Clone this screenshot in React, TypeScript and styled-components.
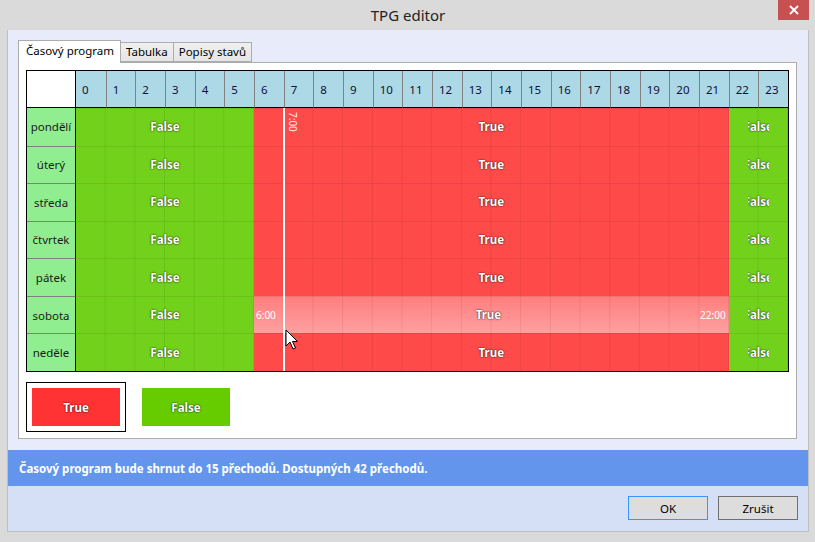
import React, { FC } from 'react';
import styled, { createGlobalStyle } from 'styled-components';

const FONT = '"Noto Sans", "Open Sans", sans-serif';
const TEXT_SIZE = '11.5px';
const HOURS = Array.from({ length: 24 }, (_, i) => i);
const DAYS = ['pondělí', 'úterý', 'středa', 'čtvrtek', 'pátek', 'sobota', 'neděle'];

type Segment = { from: number; to: number; value: boolean; clip?: boolean };
const SEGMENTS: Segment[] = [
  { from: 0, to: 6, value: false },
  { from: 6, to: 22, value: true },
  { from: 22, to: 24, value: false, clip: true },
];
const SELECTED_DAY = 5;

const GlobalStyle = createGlobalStyle`
  html, body {
    margin: 0;
    padding: 0;
    width: 815px;
    height: 542px;
    overflow: hidden;
    background: #dadada;
    font-family: ${FONT};
  }
`;

const Window = styled.div`
  position: relative;
  display: flex;
  flex-direction: column;
  width: 815px;
  height: 542px;
  box-sizing: border-box;
  padding: 0 6px 10px 7px;
  background: #dadada;
`;

const TitleBar = styled.div`
  display: grid;
  grid-template-columns: 1fr auto 1fr;
  height: 30px;
  flex: 0 0 auto;
`;
const Title = styled.div`
  grid-column: 2;
  align-self: center;
  font-size: 15px;
  color: #222;
  padding-bottom: 1px;
`;
const CloseButton = styled.div`
  grid-column: 3;
  justify-self: end;
  align-self: start;
  width: 31px;
  height: 20px;
  background: #c75050;
  display: flex;
  align-items: center;
  justify-content: center;
`;

const Client = styled.div`
  flex: 1 1 auto;
  display: flex;
  flex-direction: column;
  border: 1px solid #bfbfbf;
  border-top: none;
  background: #e8ebf9;
`;

const TabArea = styled.div`
  display: flex;
  flex-direction: column;
  padding: 10px 11px 11px 10px;
`;
const TabStrip = styled.div`
  display: flex;
  align-items: flex-end;
`;
const Tab = styled.div<{ $active?: boolean }>`
  box-sizing: border-box;
  position: relative;
  z-index: ${(p) => (p.$active ? 1 : 0)};
  height: ${(p) => (p.$active ? 23 : 20)}px;
  margin-bottom: ${(p) => (p.$active ? -1 : 0)}px;
  margin-left: ${(p) => (p.$active ? 0 : -1)}px;
  padding: ${(p) => (p.$active ? '2px 6px 0 7px' : '1px 5px 0 5px')};
  border: 1px solid #acacac;
  border-bottom: ${(p) => (p.$active ? 'none' : '1px solid #acacac')};
  background: ${(p) => (p.$active ? '#ffffff' : 'linear-gradient(#f0f0f0, #e5e5e5)')};
  font-size: ${TEXT_SIZE};
  color: #000;
  white-space: nowrap;
`;
const TabPanel = styled.div`
  display: flex;
  flex-direction: column;
  height: 377px;
  box-sizing: border-box;
  border: 1px solid #acacac;
  background: #ffffff;
  padding: 7px 7px 6px 7px;
`;

const Schedule = styled.div`
  display: grid;
  grid-template-columns: 49px repeat(24, 1fr);
  grid-template-rows: 37px repeat(7, 1fr);
  height: 302px;
  box-sizing: border-box;
  border: 1px solid #000;
`;
const Corner = styled.div`
  background: #fff;
  border-right: 1px solid #000;
  border-bottom: 1px solid #000;
`;
const HourCell = styled.div<{ $first?: boolean }>`
  background: #add8e6;
  border-bottom: 1px solid #000;
  border-left: ${(p) => (p.$first ? 'none' : '1px solid #808080')};
  display: flex;
  align-items: center;
  padding-left: 6px;
  padding-top: 1px;
  font-size: ${TEXT_SIZE};
  color: #10103a;
`;
const DayCell = styled.div<{ $row: number }>`
  grid-column: 1;
  grid-row: ${(p) => p.$row + 2};
  background: #90ee90;
  border-right: 1px solid #000;
  border-top: ${(p) => (p.$row === 0 ? 'none' : '1px solid #808080')};
  display: flex;
  align-items: center;
  justify-content: center;
  font-size: ${TEXT_SIZE};
  color: #1a1a1a;
`;

const Body = styled.div`
  grid-column: 2 / -1;
  grid-row: 2 / -1;
  position: relative;
  display: flex;
  flex-direction: column;
`;
const DayRow = styled.div`
  flex: 1 1 0;
  display: grid;
  grid-template-columns: repeat(24, 1fr);
`;

const cellLines = (span: number) =>
  `linear-gradient(to bottom, rgba(0,0,0,0.07) 1px, transparent 1px) 0 0 / 100% 100% no-repeat,
   linear-gradient(to right, transparent calc(100% - 1px), rgba(0,0,0,0.07) calc(100% - 1px)) 0 0 / calc(100% / ${span}) 100% repeat-x`;

const SegmentBox = styled.div<{ $from: number; $to: number; $value: boolean; $selected: boolean }>`
  grid-column: ${(p) => p.$from + 1} / ${(p) => p.$to + 1};
  display: flex;
  align-items: center;
  justify-content: space-between;
  background: ${(p) => cellLines(p.$to - p.$from)},
    ${(p) =>
      p.$selected
        ? 'linear-gradient(to bottom, #ff7d7d, #ffa0a0)'
        : p.$value
          ? '#ff4a4a'
          : '#72d11b'};
  overflow: hidden;
`;
const SegmentLabel = styled.div<{ $clip?: boolean }>`
  flex: 1 1 auto;
  display: flex;
  justify-content: center;
  ${(p) => (p.$clip ? 'max-width: 21px; margin: 0 auto; overflow: hidden;' : '')}
  font-size: ${TEXT_SIZE};
  font-weight: bold;
  color: #fff;
  white-space: nowrap;
  text-shadow: 0 0 2px rgba(0, 0, 0, 0.75), 0 0 1px rgba(0, 0, 0, 0.5);
`;
const TimeMark = styled.div`
  flex: 0 0 auto;
  padding: 0 3px 0 2px;
  font-size: 10px;
  color: #fff;
  white-space: nowrap;
`;

const NowLine = styled.div`
  position: absolute;
  top: 0;
  bottom: 0;
  left: calc(100% * 7 / 24 - 1px);
  width: 2px;
  background: #fff;
  pointer-events: none;
`;
const NowLabel = styled.div`
  position: absolute;
  top: 4px;
  left: calc(100% * 7 / 24 + 2px);
  writing-mode: vertical-rl;
  font-size: 10px;
  color: #fff;
  opacity: 0.9;
`;

const Legend = styled.div`
  display: flex;
  align-items: center;
  gap: 16px;
  margin-top: 10px;
`;
const LegendFrame = styled.div`
  border: 1px solid #000;
  padding: 5px;
`;
const LegendButton = styled.div<{ $value: boolean }>`
  width: 88px;
  height: 38px;
  background: ${(p) => (p.$value ? '#ff3333' : '#66cc00')};
  display: flex;
  align-items: center;
  justify-content: center;
  font-size: ${TEXT_SIZE};
  font-weight: bold;
  color: #fff;
  text-shadow: 0 0 2px rgba(0, 0, 0, 0.75), 0 0 1px rgba(0, 0, 0, 0.5);
`;

const StatusBar = styled.div`
  height: 36px;
  display: flex;
  align-items: center;
  padding-left: 11px;
  background: #6495ed;
  font-size: ${TEXT_SIZE};
  font-weight: bold;
  color: #fff;
`;

const Footer = styled.div`
  flex: 1 1 auto;
  display: flex;
  justify-content: flex-end;
  align-items: flex-start;
  gap: 10px;
  padding: 10px 10px 0 0;
  background: #d5e0f7;
`;
const DialogButton = styled.div<{ $default?: boolean }>`
  width: 80px;
  height: 24px;
  box-sizing: border-box;
  border: 1px solid ${(p) => (p.$default ? '#3399ff' : '#707070')};
  background: #dddddd;
  display: flex;
  align-items: center;
  justify-content: center;
  font-size: ${TEXT_SIZE};
  color: #000;
`;

const Cursor = styled.svg`
  position: absolute;
  left: 285px;
  top: 329px;
  width: 14px;
  height: 22px;
  pointer-events: none;
`;

const App: FC = () => (
  <Window>
    <GlobalStyle />
    <TitleBar>
      <Title>TPG editor</Title>
      <CloseButton>
        <svg width="10" height="10" viewBox="0 0 10 10">
          <path d="M1 1 L9 9 M9 1 L1 9" stroke="#fff" strokeWidth="1.8" />
        </svg>
      </CloseButton>
    </TitleBar>
    <Client>
      <TabArea>
        <TabStrip>
          <Tab $active>Časový program</Tab>
          <Tab>Tabulka</Tab>
          <Tab>Popisy stavů</Tab>
        </TabStrip>
        <TabPanel>
          <Schedule>
            <Corner />
            {HOURS.map((h) => (
              <HourCell key={h} $first={h === 0}>
                {h}
              </HourCell>
            ))}
            {DAYS.map((d, i) => (
              <DayCell key={d} $row={i}>
                {d}
              </DayCell>
            ))}
            <Body>
              {DAYS.map((d, i) => (
                <DayRow key={d}>
                  {SEGMENTS.map((s) => {
                    const selected = i === SELECTED_DAY && s.value;
                    return (
                      <SegmentBox key={s.from} $from={s.from} $to={s.to} $value={s.value} $selected={selected}>
                        {selected && <TimeMark>{s.from}:00</TimeMark>}
                        <SegmentLabel $clip={s.clip}>{s.value ? 'True' : 'False'}</SegmentLabel>
                        {selected && <TimeMark>{s.to}:00</TimeMark>}
                      </SegmentBox>
                    );
                  })}
                </DayRow>
              ))}
              <NowLine />
              <NowLabel>7:00</NowLabel>
            </Body>
          </Schedule>
          <Legend>
            <LegendFrame>
              <LegendButton $value>True</LegendButton>
            </LegendFrame>
            <LegendButton $value={false}>False</LegendButton>
          </Legend>
        </TabPanel>
      </TabArea>
      <StatusBar>Časový program bude shrnut do 15 přechodů. Dostupných 42 přechodů.</StatusBar>
      <Footer>
        <DialogButton $default>OK</DialogButton>
        <DialogButton>Zrušit</DialogButton>
      </Footer>
    </Client>
    <Cursor viewBox="0 0 14 22">
      <path d="M1 1 L1 17 L5 13 L8 20 L10.5 19 L7.5 12.5 L12.5 12.5 Z" fill="#fff" stroke="#000" strokeWidth="1" strokeLinejoin="miter" />
    </Cursor>
  </Window>
);

export default App;
